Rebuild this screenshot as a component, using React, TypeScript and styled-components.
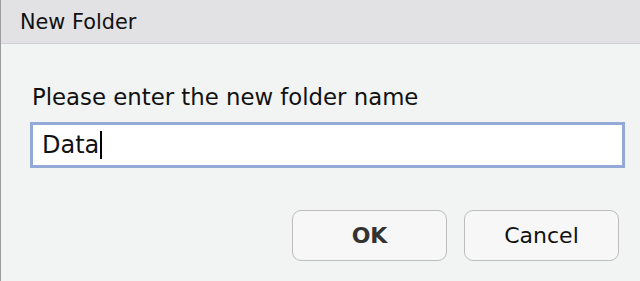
import styled, { createGlobalStyle } from 'styled-components';

const GlobalStyle = createGlobalStyle`
  html, body {
    margin: 0;
    padding: 0;
    background: #f2f3f3;
  }
  body {
    font-family: 'DejaVu Sans', 'Liberation Sans', sans-serif;
    color: #111;
  }
`;

const Window = styled.div`
  width: 640px;
  height: 281px;
  box-sizing: border-box;
  border-left: 1px solid #9c9c9c;
  background: #f2f3f3;
  display: flex;
  flex-direction: column;
`;

const TitleBar = styled.div`
  height: 43px;
  flex: none;
  display: flex;
  align-items: center;
  padding-left: 19px;
  background: #e2e2e5;
  border-bottom: 1px solid #d0d0d3;
  font-size: 20.8px;
`;

const Body = styled.div`
  flex: 1;
  display: flex;
  flex-direction: column;
  padding: 40px 14px 0 29px;
`;

const Label = styled.label`
  font-size: 22.8px;
  line-height: 26px;
  margin-left: 2px;
`;

const TextField = styled.div`
  margin-top: 12px;
  width: 595px;
  height: 46px;
  box-sizing: border-box;
  border: 3px solid #93a9d6;
  background: #fff;
  display: flex;
  align-items: center;
  padding-left: 9px;
  font-size: 24px;
`;

const Caret = styled.span`
  display: inline-block;
  width: 2px;
  height: 28px;
  margin-left: 1px;
  background: #000;
`;

const Actions = styled.div`
  margin-top: 42px;
  display: flex;
  justify-content: flex-end;
  gap: 17px;
  padding-right: 7px;
`;

const Button = styled.button<{ $primary?: boolean }>`
  width: 155px;
  height: 51px;
  box-sizing: border-box;
  border: 1.5px solid #bdbdbd;
  border-radius: 9px;
  background: #f7f7f7;
  font-family: 'DejaVu Sans', 'Liberation Sans', sans-serif;
  font-size: 22px;
  font-weight: ${(p) => (p.$primary ? 700 : 400)};
  color: ${(p) => (p.$primary ? '#333' : '#111')};
  padding: 0;
`;

export default function App() {
  return (
    <>
      <GlobalStyle />
      <Window>
        <TitleBar>New Folder</TitleBar>
        <Body>
          <Label>Please enter the new folder name</Label>
          <TextField>
            Data
            <Caret />
          </TextField>
          <Actions>
            <Button $primary>OK</Button>
            <Button>Cancel</Button>
          </Actions>
        </Body>
      </Window>
    </>
  );
}
